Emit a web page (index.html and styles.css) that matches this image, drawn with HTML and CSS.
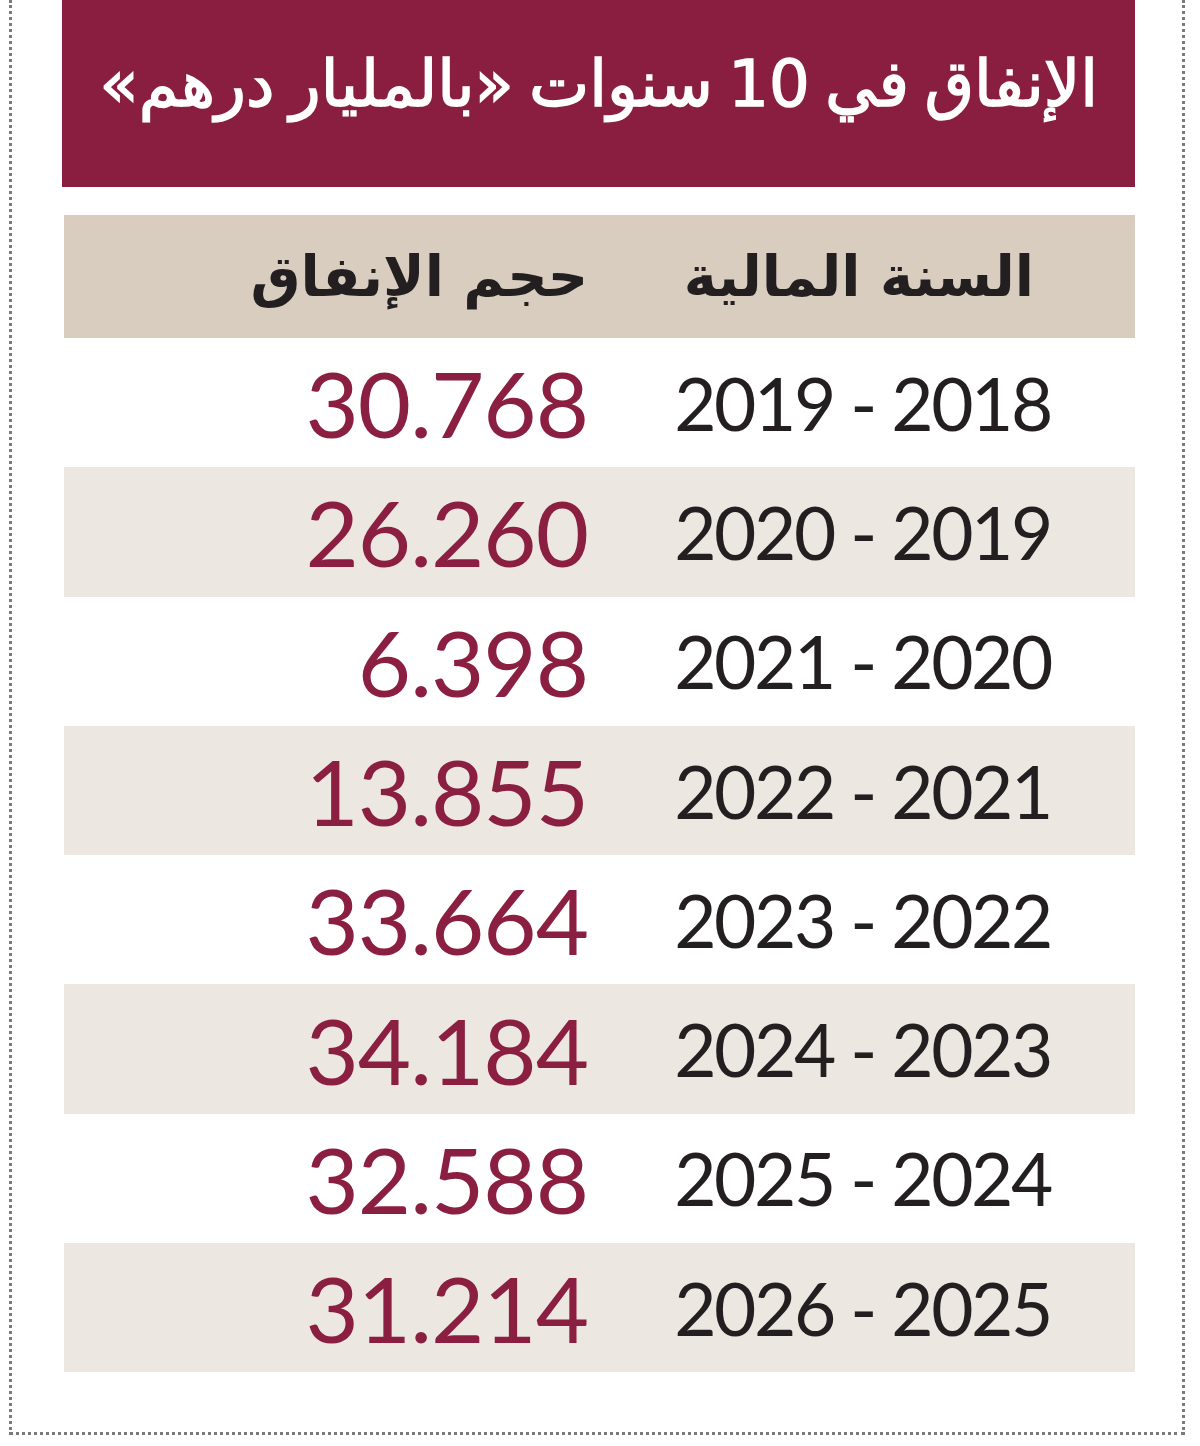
FILE: index.html
```html
<!DOCTYPE html>
<html lang="ar">
<head>
<meta charset="utf-8">
<title>الإنفاق في 10 سنوات</title>
<link rel="stylesheet" href="styles.css">
</head>
<body>
<div class="frame">
  <div class="title-bar" dir="rtl">
    <h1 class="title">الإنفاق في 10 سنوات «بالمليار درهم»</h1>
  </div>
  <div class="table" dir="rtl">
    <div class="row head">
      <div class="cell year">السنة المالية</div>
      <div class="cell value">حجم الإنفاق</div>
    </div>
    <div class="row"><div class="cell year">2018 - 2019</div><div class="cell value">30.768</div></div>
    <div class="row alt"><div class="cell year">2019 - 2020</div><div class="cell value">26.260</div></div>
    <div class="row"><div class="cell year">2020 - 2021</div><div class="cell value">6.398</div></div>
    <div class="row alt"><div class="cell year">2021 - 2022</div><div class="cell value">13.855</div></div>
    <div class="row"><div class="cell year">2022 - 2023</div><div class="cell value">33.664</div></div>
    <div class="row alt"><div class="cell year">2023 - 2024</div><div class="cell value">34.184</div></div>
    <div class="row"><div class="cell year">2024 - 2025</div><div class="cell value">32.588</div></div>
    <div class="row alt"><div class="cell year">2025 - 2026</div><div class="cell value">31.214</div></div>
  </div>
</div>
</body>
</html>
```

FILE: styles.css
```css
html, body {
  margin: 0;
  padding: 0;
  background: #ffffff;
}
.frame {
  box-sizing: border-box;
  width: 1176px;
  height: 1435px;
  margin-left: 9px;
  border: 3px dotted #7a7a7a;
  border-top: 0;
  padding: 0 47px 0 50px;
}
.title-bar {
  height: 187px;
  background: #8a1e40;
  display: flex;
  align-items: center;
  padding-right: 37px;
  padding-bottom: 20px;
  box-sizing: border-box;
}
.title {
  margin: 0;
  color: #ffffff;
  font-family: "DejaVu Sans", sans-serif;
  font-weight: normal;
  font-size: 64px;
  line-height: 1;
  white-space: nowrap;
  word-spacing: -5px;
  -webkit-text-stroke: 1.5px #ffffff;
}
.table {
  margin: 28px 0 0 2px;
}
.row {
  display: grid;
  grid-template-columns: 514px 1fr;
  height: 129.3px;
  align-items: center;
}
.row.alt {
  background: #ece7e0;
}
.row.head {
  height: 123px;
  background: #d9cdc0;
}
.cell {
  font-family: "Lato", sans-serif;
  white-space: nowrap;
}
.year {
  padding-right: 84px;
  font-size: 73px;
  color: #231f20;
  letter-spacing: -2.4px;
}
.value {
  padding-right: 33px;
  font-size: 92px;
  color: #8b1f42;
  letter-spacing: -1px;
}
.head .cell {
  font-family: "DejaVu Sans", sans-serif;
  font-weight: bold;
  font-size: 56px;
  color: #231f20;
  letter-spacing: 0;
}
.head .year {
  padding-right: 101px;
}
```
